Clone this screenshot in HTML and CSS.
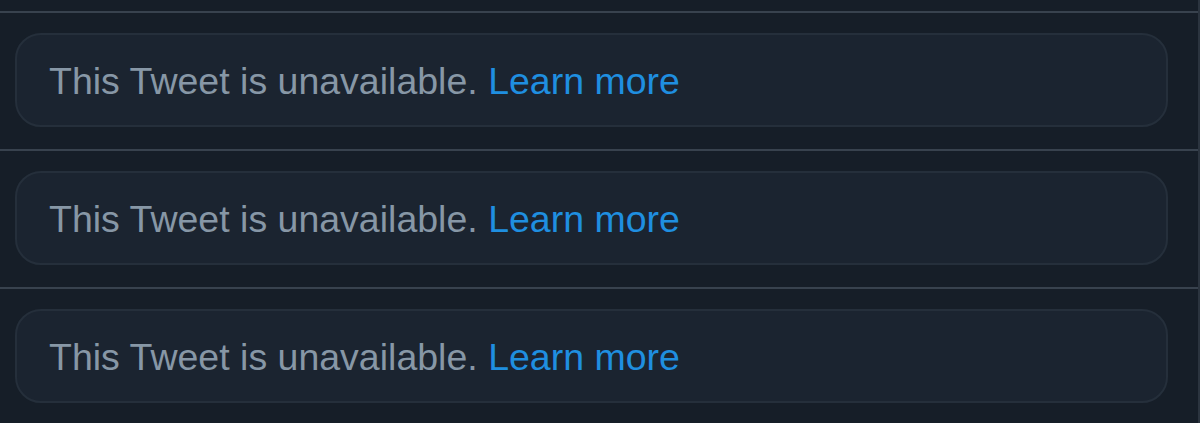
FILE: index.html
```html
<!DOCTYPE html>
<html>
<head>
<meta charset="utf-8">
<link rel="stylesheet" href="styles.css">
</head>
<body>
<div class="timeline">
  <div class="item">
    <div class="card"><p class="text"><span class="msg">This Tweet is unavailable.</span> <a class="link" href="#">Learn more</a></p></div>
  </div>
  <div class="item">
    <div class="card"><p class="text"><span class="msg">This Tweet is unavailable.</span> <a class="link" href="#">Learn more</a></p></div>
  </div>
  <div class="item">
    <div class="card"><p class="text"><span class="msg">This Tweet is unavailable.</span> <a class="link" href="#">Learn more</a></p></div>
  </div>
</div>
</body>
</html>
```
FILE: styles.css
```css
html, body {
  margin: 0;
  padding: 0;
  background: #161e28;
  height: 100%;
  overflow: hidden;
}
.timeline {
  padding-top: 11px;
  border-right: 2px solid #2b343f;
  height: 100%;
  box-sizing: border-box;
}
.item {
  border-top: 2px solid #38424e;
  padding: 20px 30px 22px 15px;
}
.card {
  box-sizing: border-box;
  height: 94px;
  border: 2px solid #252f3b;
  border-radius: 26px;
  background: #1b2430;
  display: flex;
  align-items: center;
  padding-left: 32px;
  padding-top: 3px;
}
.text {
  margin: 0;
  font-family: "Liberation Sans", Arial, sans-serif;
  font-size: 37.5px;
  line-height: 1;
  white-space: nowrap;
}
.msg {
  color: #8797a6;
}
.link {
  color: #1f8fe0;
  text-decoration: none;
}
```
